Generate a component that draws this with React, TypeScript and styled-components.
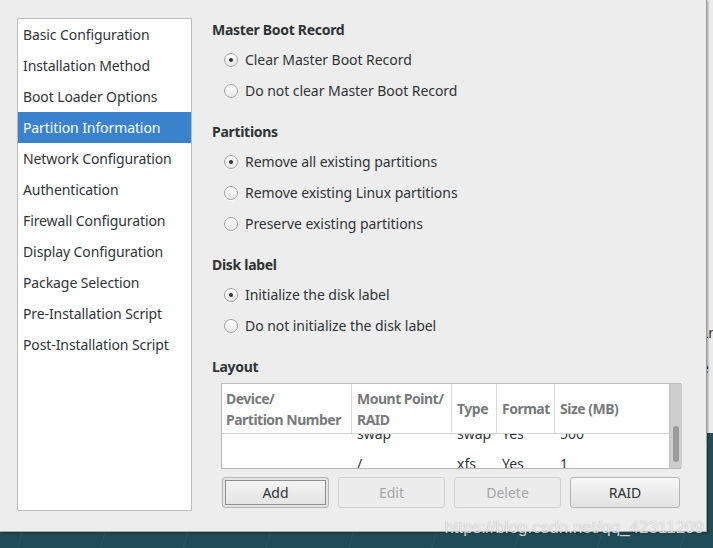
import React from 'react';
import styled, { createGlobalStyle } from 'styled-components';

const Global = createGlobalStyle`
  html, body { margin: 0; padding: 0; }
  body {
    background: #1f4c56;
    font-family: "Noto Sans", "DejaVu Sans", sans-serif;
    color: #2e3436;
  }
`;

const Desktop = styled.div`
  position: relative;
  width: 713px;
  height: 548px;
  overflow: hidden;
  display: flex;
  align-items: flex-start;
  background-color: #1f4c56;
  background-image: repeating-linear-gradient(
    105deg,
    transparent 0px,
    transparent 78px,
    rgba(255, 255, 255, 0.05) 79px,
    transparent 80px
  );
`;

const Window = styled.div`
  width: 707px;
  height: 532px;
  box-sizing: border-box;
  flex-shrink: 0;
  background: #ededed;
  border-right: 1px solid #9e9e9e;
  border-bottom: 1px solid #a9a9a9;
  box-shadow: 1px 1px 2px rgba(0, 0, 0, 0.35);
  display: flex;
  align-items: flex-start;
  gap: 20px;
  padding: 18px 0 0 17px;
  position: relative;
  z-index: 1;
`;

const BackWindow = styled.div`
  width: 6px;
  height: 433px;
  flex-shrink: 0;
  background: #ececec;
  overflow: hidden;
  display: flex;
  flex-direction: column;
  padding-top: 323px;
  box-sizing: border-box;
  gap: 15px;
`;

const BackText = styled.span`
  font-size: 14px;
  line-height: 20px;
  color: #2e3436;
  margin-left: -6px;
  white-space: nowrap;
`;

const Sidebar = styled.ul`
  list-style: none;
  margin: 0;
  padding: 0;
  width: 175px;
  height: 493px;
  box-sizing: border-box;
  background: #ffffff;
  border: 1px solid #bcbcbc;
  flex-shrink: 0;
`;

const NavItem = styled.li<{ $active?: boolean }>`
  height: 31px;
  line-height: 31px;
  padding-left: 5px;
  font-size: 14px;
  letter-spacing: -0.1px;
  white-space: nowrap;
  color: ${(p) => (p.$active ? '#ffffff' : '#2e3436')};
  background: ${(p) => (p.$active ? '#3b82cd' : 'transparent')};
`;

const Main = styled.div`
  display: flex;
  flex-direction: column;
  padding-top: 2px;
  width: 470px;
`;

const Section = styled.section`
  display: flex;
  flex-direction: column;
  margin-bottom: 16px;
`;

const Heading = styled.h3<{ $gap?: number }>`
  margin: 0 0 ${(p) => p.$gap ?? 4}px 0;
  font-size: 14px;
  line-height: 20px;
  font-weight: 700;
  letter-spacing: -0.3px;
  color: #2e3436;
`;

const RadioRow = styled.label`
  display: flex;
  align-items: center;
  gap: 7px;
  height: 31px;
  padding-left: 12px;
  font-size: 14px;
  letter-spacing: -0.05px;
  color: #2e3436;
  white-space: nowrap;
`;

const RadioCircle = styled.span<{ $checked?: boolean }>`
  width: 14px;
  height: 14px;
  box-sizing: border-box;
  border-radius: 50%;
  border: 1px solid #a3a3a3;
  background: linear-gradient(#ffffff, #e6e6e6);
  box-shadow: 0 1px 0 rgba(255, 255, 255, 0.8);
  display: flex;
  align-items: center;
  justify-content: center;
  flex-shrink: 0;
  &::after {
    content: '';
    width: 4px;
    height: 4px;
    border-radius: 50%;
    background: #2e3436;
    display: ${(p) => (p.$checked ? 'block' : 'none')};
  }
`;

const Table = styled.div`
  margin-left: 9px;
  width: 460px;
  height: 86px;
  box-sizing: border-box;
  border: 1px solid #b9b9b9;
  background: #ffffff;
  display: grid;
  grid-template-columns: 447px 13px;
  position: relative;
`;

const TableMain = styled.div`
  display: flex;
  flex-direction: column;
  overflow: hidden;
`;

const COLS = '129px 100px 45px 58px 113px';

const HeaderRow = styled.div`
  display: grid;
  grid-template-columns: ${COLS};
  height: 49px;
  border-bottom: 1px solid #d3d3d3;
  flex-shrink: 0;
  background: #ffffff;
`;

const HeaderCell = styled.div<{ $first?: boolean }>`
  display: flex;
  align-items: center;
  padding-left: ${(p) => (p.$first ? 4 : 5)}px;
  border-left: ${(p) => (p.$first ? 'none' : '1px solid #dcdcdc')};
  font-size: 14px;
  line-height: 21px;
  font-weight: 700;
  letter-spacing: -0.5px;
  color: #777a7a;
  white-space: nowrap;
  overflow: hidden;
`;

const Body = styled.div`
  flex: 1;
  overflow: hidden;
`;

const Rows = styled.div`
  margin-top: -16px;
`;

const BodyRow = styled.div`
  display: grid;
  grid-template-columns: ${COLS};
  height: 30px;
  align-items: center;
`;

const BodyCell = styled.div`
  padding-left: 6px;
  font-size: 14px;
  color: #2e3436;
  white-space: nowrap;
`;

const Scrollbar = styled.div`
  background: #cecece;
  border-left: 1px solid #c4c4c4;
  display: flex;
  flex-direction: column;
  align-items: center;
  padding-top: 42px;
  box-sizing: border-box;
`;

const Thumb = styled.div`
  width: 6px;
  height: 36px;
  border-radius: 3px;
  background: #9b9b9b;
`;

const ButtonRow = styled.div`
  margin: 8px 0 0 10px;
  width: 458px;
  display: grid;
  grid-template-columns: 107px 107px 107px 110px;
  gap: 9px;
`;

const Button = styled.button<{ $default?: boolean }>`
  height: 31px;
  box-sizing: border-box;
  border-radius: 3px;
  font-family: inherit;
  font-size: 14px;
  padding: 0;
  color: ${(p) => (p.disabled ? '#a4a6a6' : '#2e3436')};
  border: 1px solid ${(p) => (p.disabled ? '#cfcfcf' : '#b4b4b4')};
  background: ${(p) =>
    p.disabled ? '#ececec' : 'linear-gradient(#f6f6f6, #e2e2e2)'};
  box-shadow: ${(p) =>
    p.$default
      ? 'inset 0 0 0 2px #e4e4e4, inset 0 0 0 3px #8f8f8f'
      : p.disabled
      ? 'none'
      : 'inset 0 1px 0 #ffffff'};
`;

const Watermark = styled.div`
  position: absolute;
  right: 9px;
  top: 517px;
  font-family: "Liberation Sans", Arial, sans-serif;
  font-size: 17px;
  line-height: 22px;
  color: rgba(255, 255, 255, 0.78);
  text-shadow: 0 0 1px rgba(0, 0, 0, 0.35);
  z-index: 2;
  pointer-events: none;
`;

const navItems = [
  'Basic Configuration',
  'Installation Method',
  'Boot Loader Options',
  'Partition Information',
  'Network Configuration',
  'Authentication',
  'Firewall Configuration',
  'Display Configuration',
  'Package Selection',
  'Pre-Installation Script',
  'Post-Installation Script',
];

type Group = { title: string; options: { label: string; checked?: boolean }[] };

const groups: Group[] = [
  {
    title: 'Master Boot Record',
    options: [
      { label: 'Clear Master Boot Record', checked: true },
      { label: 'Do not clear Master Boot Record' },
    ],
  },
  {
    title: 'Partitions',
    options: [
      { label: 'Remove all existing partitions', checked: true },
      { label: 'Remove existing Linux partitions' },
      { label: 'Preserve existing partitions' },
    ],
  },
  {
    title: 'Disk label',
    options: [
      { label: 'Initialize the disk label', checked: true },
      { label: 'Do not initialize the disk label' },
    ],
  },
];

const rows = [
  ['', 'swap', 'swap', 'Yes', '500'],
  ['', '/', 'xfs', 'Yes', '1'],
];

export default function App() {
  return (
    <Desktop>
      <Global />
      <Window>
        <Sidebar>
          {navItems.map((n) => (
            <NavItem key={n} $active={n === 'Partition Information'}>
              {n}
            </NavItem>
          ))}
        </Sidebar>
        <Main>
          {groups.map((g) => (
            <Section key={g.title}>
              <Heading>{g.title}</Heading>
              {g.options.map((o) => (
                <RadioRow key={o.label}>
                  <RadioCircle $checked={o.checked} />
                  {o.label}
                </RadioRow>
              ))}
            </Section>
          ))}
          <Heading $gap={6}>Layout</Heading>
          <Table>
            <TableMain>
              <HeaderRow>
                <HeaderCell $first>
                  Device/
                  <br />
                  Partition Number
                </HeaderCell>
                <HeaderCell>
                  Mount Point/
                  <br />
                  RAID
                </HeaderCell>
                <HeaderCell>Type</HeaderCell>
                <HeaderCell>Format</HeaderCell>
                <HeaderCell>Size (MB)</HeaderCell>
              </HeaderRow>
              <Body>
                <Rows>
                  {rows.map((r, i) => (
                    <BodyRow key={i}>
                      {r.map((c, j) => (
                        <BodyCell key={j}>{c}</BodyCell>
                      ))}
                    </BodyRow>
                  ))}
                </Rows>
              </Body>
            </TableMain>
            <Scrollbar>
              <Thumb />
            </Scrollbar>
          </Table>
          <ButtonRow>
            <Button $default>Add</Button>
            <Button disabled>Edit</Button>
            <Button disabled>Delete</Button>
            <Button>RAID</Button>
          </ButtonRow>
        </Main>
      </Window>
      <BackWindow>
        <BackText>Ln</BackText>
        <BackText>e</BackText>
      </BackWindow>
      <Watermark>https://blog.csdn.net/qq_42311209</Watermark>
    </Desktop>
  );
}
